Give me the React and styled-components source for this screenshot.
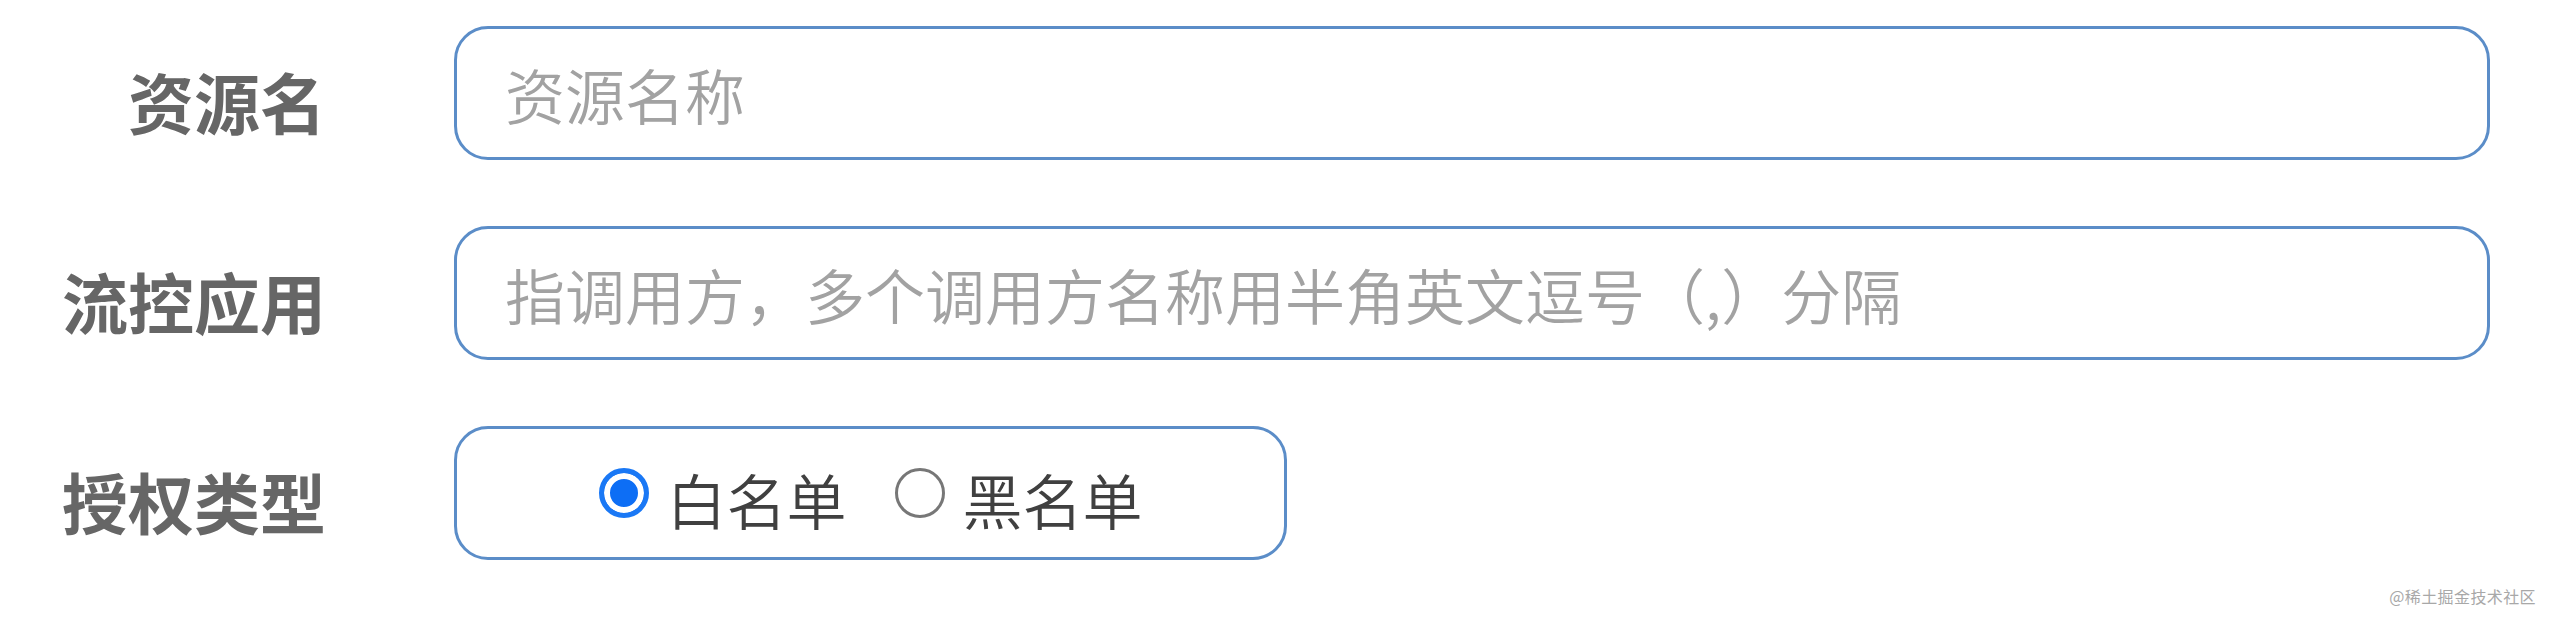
import React from 'react';
import styled, { createGlobalStyle } from 'styled-components';

const GlobalStyle = createGlobalStyle`
  html, body {
    margin: 0;
    padding: 0;
    background: #ffffff;
  }
  body {
    font-family: "Noto Sans CJK SC", "Noto Sans", sans-serif;
  }
`;

const Page = styled.div`
  position: relative;
  width: 2560px;
  height: 617px;
  box-sizing: border-box;
  padding-top: 26px;
`;

const Form = styled.form`
  display: flex;
  flex-direction: column;
  gap: 66px;
`;

const Row = styled.div`
  display: grid;
  grid-template-columns: 326px 2036px;
  column-gap: 128px;
  align-items: center;
`;

const Label = styled.label`
  text-align: right;
  font-size: 66px;
  font-weight: 700;
  color: #666666;
  line-height: 1;
  padding-top: 14px;
  white-space: nowrap;
`;

const TextInput = styled.input`
  box-sizing: border-box;
  width: 100%;
  height: 134px;
  border: 3px solid #5b8dc8;
  border-radius: 34px;
  padding: 0 40px 0 48px;
  font-family: inherit;
  font-size: 60px;
  font-weight: 350;
  color: #333333;
  background: #ffffff;
  outline: none;

  &::placeholder {
    color: #a2a2a2;
  }
`;

const RadioBox = styled.div`
  box-sizing: border-box;
  width: ${(props) => props.width}px;
  height: 134px;
  border: 3px solid #5b8dc8;
  border-radius: 34px;
  display: flex;
  align-items: center;
  justify-content: center;
  gap: 48px;
  padding-top: 12px;
`;

const Option = styled.label`
  display: flex;
  align-items: center;
  gap: 18px;
  font-size: 60px;
  font-weight: 350;
  color: #404040;
  line-height: 1;
  cursor: pointer;
`;

const Radio = styled.input`
  appearance: none;
  margin: 0;
  box-sizing: border-box;
  width: 50px;
  height: 50px;
  border-radius: 50%;
  border: 3px solid #777777;
  background: #ffffff;
  margin-top: -12px;

  &:checked {
    border: 5px solid #1a78f5;
    background: #0d6ef5;
    box-shadow: inset 0 0 0 6px #ffffff;
  }
`;

const Watermark = styled.div`
  position: absolute;
  right: 24px;
  bottom: 9px;
  font-size: 16px;
  color: #a8a8a8;
  letter-spacing: 0.4px;
`;

const App = () => (
  <Page>
    <GlobalStyle />
    <Form>
      <Row>
        <Label htmlFor="resource">资源名</Label>
        <TextInput id="resource" placeholder="资源名称" />
      </Row>
      <Row>
        <Label htmlFor="limitApp">流控应用</Label>
        <TextInput
          id="limitApp"
          placeholder="指调用方，多个调用方名称用半角英文逗号（,）分隔"
        />
      </Row>
      <Row>
        <Label>授权类型</Label>
        <RadioBox width={833}>
          <Option>
            <Radio type="radio" name="strategy" defaultChecked />
            白名单
          </Option>
          <Option>
            <Radio type="radio" name="strategy" />
            黑名单
          </Option>
        </RadioBox>
      </Row>
    </Form>
    <Watermark>@稀土掘金技术社区</Watermark>
  </Page>
);

export default App;
